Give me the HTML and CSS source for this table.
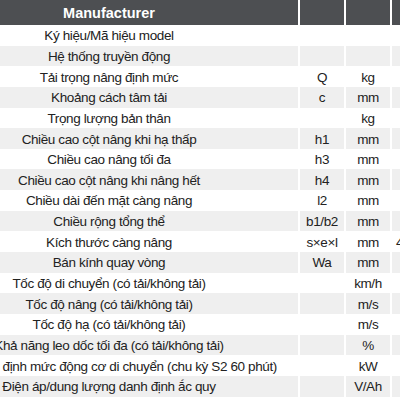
FILE: index.html
```html
<!DOCTYPE html>
<html lang="vi">
<head>
<meta charset="utf-8">
<title>Thông số kỹ thuật</title>
<link rel="stylesheet" href="styles.css">
</head>
<body>
<table class="spec">
  <colgroup>
    <col class="c-label"><col class="c-sym"><col class="c-unit"><col class="c-val">
  </colgroup>
  <thead>
    <tr class="head"><th>Manufacturer</th><th></th><th></th><th></th></tr>
  </thead>
  <tbody>
    <tr><td>Ký hiệu/Mã hiệu model</td><td></td><td></td><td></td></tr>
    <tr class="alt"><td>Hệ thống truyền động</td><td></td><td></td><td></td></tr>
    <tr><td>Tải trọng nâng định mức</td><td>Q</td><td>kg</td><td></td></tr>
    <tr class="alt"><td>Khoảng cách tâm tải</td><td>c</td><td>mm</td><td></td></tr>
    <tr><td>Trọng lượng bản thân</td><td></td><td>kg</td><td></td></tr>
    <tr class="alt"><td>Chiều cao cột nâng khi hạ thấp</td><td>h1</td><td>mm</td><td></td></tr>
    <tr><td>Chiều cao nâng tối đa</td><td>h3</td><td>mm</td><td></td></tr>
    <tr class="alt"><td>Chiều cao cột nâng khi nâng hết</td><td>h4</td><td>mm</td><td></td></tr>
    <tr><td>Chiều dài đến mặt càng nâng</td><td>l2</td><td>mm</td><td></td></tr>
    <tr class="alt"><td>Chiều rộng tổng thể</td><td>b1/b2</td><td>mm</td><td></td></tr>
    <tr><td>Kích thước càng nâng</td><td>s×e×l</td><td>mm</td><td class="val">4</td></tr>
    <tr class="alt"><td>Bán kính quay vòng</td><td>Wa</td><td>mm</td><td></td></tr>
    <tr><td>Tốc độ di chuyển (có tải/không tải)</td><td></td><td>km/h</td><td></td></tr>
    <tr class="alt"><td>Tốc độ nâng (có tải/không tải)</td><td></td><td>m/s</td><td></td></tr>
    <tr><td>Tốc độ hạ (có tải/không tải)</td><td></td><td>m/s</td><td></td></tr>
    <tr class="alt"><td>Khả năng leo dốc tối đa (có tải/không tải)</td><td></td><td>%</td><td></td></tr>
    <tr><td>Công suất định mức động cơ di chuyển (chu kỳ S2 60 phút)</td><td></td><td>kW</td><td></td></tr>
    <tr class="alt"><td>Điện áp/dung lượng danh định ắc quy</td><td></td><td>V/Ah</td><td></td></tr>
  </tbody>
</table>
</body>
</html>
```

FILE: styles.css
```css
html, body {
  margin: 0;
  padding: 0;
  overflow: hidden;
  background: #ffffff;
}

.spec {
  margin-left: -82px;
  border-collapse: separate;
  border-spacing: 2.5px 0;
  table-layout: fixed;
  width: 520px;
  font-family: "Liberation Sans", Arial, sans-serif;
  font-size: 13.5px;
  letter-spacing: -0.38px;
  color: #222222;
}

.c-label { width: 378px; }
.c-sym { width: 44px; }
.c-unit { width: 44px; }
.c-val { width: 44px; }

.spec th,
.spec td {
  padding: 0;
  text-align: center;
  vertical-align: middle;
  white-space: nowrap;
  overflow: visible;
  line-height: 16px;
}

.spec td {
  padding-top: 2px;
}

.head th {
  height: 25px;
  background: #4d4f52;
  color: #ffffff;
  font-weight: bold;
  font-size: 14.5px;
  letter-spacing: 0;
}

.spec tbody tr {
  height: 20.65px;
}

.spec tbody tr.alt td {
  background: #efefef;
}

.spec td.val {
  text-align: left;
  padding-left: 4px;
}
```
